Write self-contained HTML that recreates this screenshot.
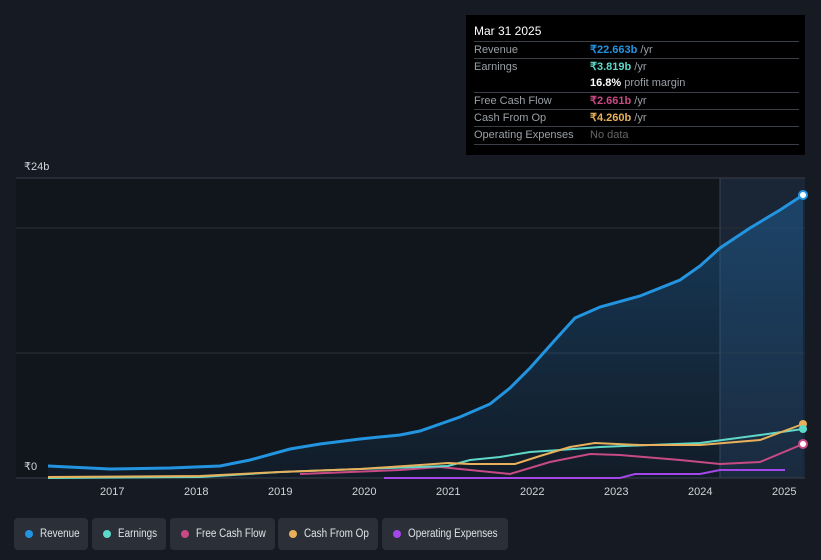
<!DOCTYPE html>
<html><head><style>
html,body{margin:0;width:821px;height:560px;overflow:hidden}
body{background:#151a23;font-family:"Liberation Sans",sans-serif;position:relative}
.tip{position:absolute;left:466px;top:15px;width:339px;height:140px;background:#000;color:#9aa0a6;font-size:11px}
.tip .h{color:#fff;font-size:12px;position:absolute;left:8px;top:9px}
.row{position:absolute;left:8px;width:325px;height:17px;border-top:1px solid #3a3e45;line-height:17px}
.row span{position:absolute;left:116px}
.leg{position:absolute;top:518px;height:32px;background:#2a2f38;border-radius:4px;color:#e0e3e7;font-size:11.5px;line-height:32px;white-space:nowrap}
.leg i{position:absolute;left:11px;top:12px;width:8px;height:8px;border-radius:50%}
.leg b{font-weight:normal;position:absolute;left:26px;transform:scaleX(0.86);transform-origin:0 50%}
.ax{position:absolute;color:#d0d3d8;font-size:11px}
</style></head><body>
<svg width="821" height="560" style="position:absolute;left:0;top:0">
<defs><linearGradient id="g" x1="0" y1="0" x2="0" y2="1"><stop offset="0" stop-color="#1e6aa8" stop-opacity=".45"/><stop offset="1" stop-color="#1e6aa8" stop-opacity=".08"/></linearGradient></defs>
<rect x="16" y="178" width="704" height="300" fill="#11151c"/>
<rect x="720" y="178" width="85" height="300" fill="#1a2535"/>
<line x1="16" y1="178" x2="805" y2="178" stroke="#3a3f48"/>
<line x1="16" y1="228" x2="805" y2="228" stroke="#2a2f38"/>
<line x1="16" y1="353" x2="805" y2="353" stroke="#2a2f38"/>
<line x1="16" y1="478" x2="805" y2="478" stroke="#3a3f48"/>
<line x1="720" y1="178" x2="720" y2="478" stroke="#3a4250"/>
<path d="M48,466 L110,469 170,468 220,466 250,460 290,449 320,444 360,439 400,435 420,431 460,417 490,404 510,388 530,368 555,340 575,318 600,307 640,296 680,280 700,266 720,248 750,228 780,210 803,195 L803,478 48,478Z" fill="url(#g)"/>
<polyline fill="none" stroke="#2394e0" stroke-width="3" points="48,466 110,469 170,468 220,466 250,460 290,449 320,444 360,439 400,435 420,431 460,417 490,404 510,388 530,368 555,340 575,318 600,307 640,296 680,280 700,266 720,248 750,228 780,210 803,195"/>
<polyline fill="none" stroke="#a347e8" stroke-width="2" points="384,478 620,478 635,474 700,474 720,470 785,470"/>
<polyline fill="none" stroke="#c84a85" stroke-width="2" points="300,474 400,470 440,467 470,470 510,474 550,462 590,454 620,455 680,460 720,464 760,462 803,444"/>
<polyline fill="none" stroke="#5ed8c8" stroke-width="2" points="48,478 200,477 280,472 360,469 420,467 448,466 470,460 500,457 530,452 560,450 600,447 700,443 760,435 803,429"/>
<polyline fill="none" stroke="#e8b05a" stroke-width="2" points="48,477 200,476 280,472 360,469 420,465 448,463 470,464 515,464 540,456 570,447 595,443 640,445 700,445 760,440 803,424"/>
<circle cx="803" cy="195" r="4" fill="#fff" stroke="#2394e0" stroke-width="2"/>
<circle cx="803" cy="424" r="4" fill="#e8b05a"/>
<circle cx="803" cy="429" r="4" fill="#5ed8c8"/>
<circle cx="803" cy="444" r="4" fill="#fff" stroke="#c84a85" stroke-width="2"/>
</svg>
<div class="ax" style="left:24px;top:160px">₹24b</div>
<div class="ax" style="left:24px;top:460px">₹0</div>
<div class="ax" style="left:100px;top:486px">2017</div>
<div class="ax" style="left:184px;top:486px">2018</div>
<div class="ax" style="left:268px;top:486px">2019</div>
<div class="ax" style="left:352px;top:486px">2020</div>
<div class="ax" style="left:436px;top:486px">2021</div>
<div class="ax" style="left:520px;top:486px">2022</div>
<div class="ax" style="left:604px;top:486px">2023</div>
<div class="ax" style="left:688px;top:486px">2024</div>
<div class="ax" style="left:772px;top:486px">2025</div>
<div class="tip">
<div class="h">Mar 31 2025</div>
<div class="row" style="top:26px">Revenue<span><b style="color:#2394e0">₹22.663b</b> /yr</span></div>
<div class="row" style="top:43px">Earnings<span><b style="color:#5ed8c8">₹3.819b</b> /yr</span></div>
<div class="row" style="top:60px;border-top:none"><span><b style="color:#fff">16.8%</b> profit margin</span></div>
<div class="row" style="top:77px">Free Cash Flow<span><b style="color:#c84a85">₹2.661b</b> /yr</span></div>
<div class="row" style="top:94px">Cash From Op<span><b style="color:#e8b05a">₹4.260b</b> /yr</span></div>
<div class="row" style="top:111px;border-bottom:1px solid #3a3e45">Operating Expenses<span style="color:#666">No data</span></div>
</div>
<div class="leg" style="left:14px;width:74px"><i style="background:#2394e0"></i><b>Revenue</b></div>
<div class="leg" style="left:92px;width:74px"><i style="background:#5ed8c8"></i><b>Earnings</b></div>
<div class="leg" style="left:170px;width:105px"><i style="background:#c84a85"></i><b>Free Cash Flow</b></div>
<div class="leg" style="left:278px;width:100px"><i style="background:#e8b05a"></i><b>Cash From Op</b></div>
<div class="leg" style="left:382px;width:126px"><i style="background:#a347e8"></i><b>Operating Expenses</b></div>
</body></html>
